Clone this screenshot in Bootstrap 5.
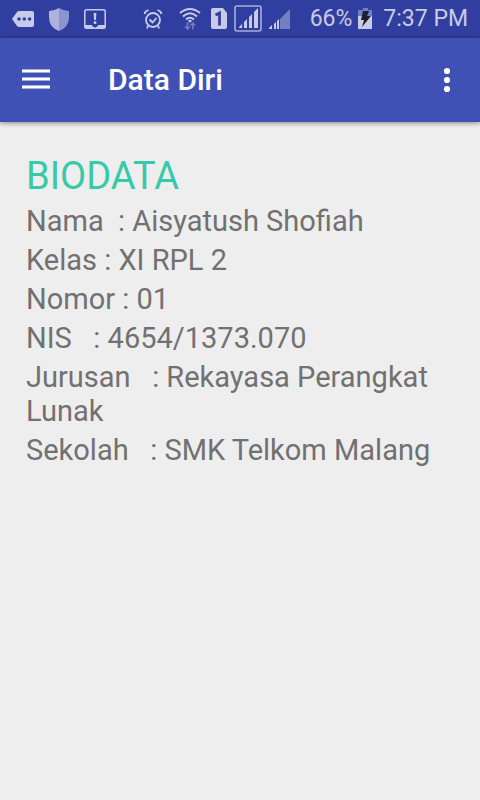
<!DOCTYPE html>
<html lang="id">
<head>
<meta charset="utf-8">
<meta name="viewport" content="width=device-width, initial-scale=1">
<title>Data Diri</title>
<link rel="stylesheet" href="https://cdn.jsdelivr.net/npm/bootstrap@5.3.0/dist/css/bootstrap.min.css">
<style>
  body { background: #eeeeee; color: #717171; font-family: Roboto, "Noto Sans", sans-serif; }
  .status-bar { background: #303f9f; color: #c8cbe7; height: 38px; padding: 0 12px; font-size: 23px; line-height: 38px; }
  .status-bar svg { display: block; flex: none; }
  .notices { gap: 14px; }
  .network { gap: 10px; }
  .radios { gap: 7px; }
  .connections { gap: 16px; }
  .indicators { gap: 19px; }
  .power { gap: 6px; }
  .readings { gap: 11px; }
  .app-bar { background: #3f51b5; height: 84px; padding: 0 22px; box-shadow: 0 1px 5px rgba(0, 0, 0, .45); }
  .app-title { font-size: 30px; line-height: 36px; font-weight: 500; margin-left: 58px; }
  .menu-button { line-height: 0; }
  .biodata { padding: 32px 26px; font-size: 29px; line-height: 34px; }
  .biodata h2 { color: #36caab; font-size: 38px; line-height: 44px; margin-bottom: 6px; }
  .biodata p { margin-bottom: 5px; white-space: pre-wrap; }
</style>
</head>
<body>
<header>
  <div class="status-bar d-flex align-items-center justify-content-between">
    <div class="notices d-flex align-items-center">
      <svg width="22" height="24" viewBox="0 0 22 24" aria-hidden="true"><path fill="#c8cbe7" d="M7 4H20q2 0 2 2V18q0 2-2 2H7q-1 0-2-1L0 12 5 5q1-1 2-1z"/><g fill="#303f9f"><circle cx="7" cy="12" r="1.8"/><circle cx="12.300" cy="12" r="1.800"/><circle cx="17.600" cy="12" r="1.800"/></g></svg>
      <svg width="22" height="24" viewBox="0 0 22 24" aria-hidden="true"><path fill="#acb2da" d="M11 1Q6 4 1 4V11Q1 20 11 24z"/><path fill="#8b94cc" d="M11 1Q16 4 21 4V11Q21 20 11 24z"/></svg>
      <svg width="22" height="24" viewBox="0 0 22 24" aria-hidden="true"><rect x=".8" y="2.800" width="20.400" height="18.400" rx="1.500" fill="none" stroke="#c8cbe7" stroke-width="1.500"/><path fill="#c8cbe7" d="M1 18H7.500L11 21.500 14.500 18H21V21H1zM9.600 6h2.800l-.5 7h-1.800z"/><circle cx="11" cy="15.500" r="1.500" fill="#c8cbe7"/></svg>
    </div>
    <div class="indicators d-flex align-items-center">
      <div class="connections d-flex align-items-center">
        <svg width="20" height="24" viewBox="0 0 20 24" fill="none" stroke="#c8cbe7" stroke-width="1.800" aria-hidden="true"><circle cx="10" cy="13" r="7"/><path d="M1.500 7Q2 4 5.500 3M18.500 7Q18 4 14.500 3M5 18.500 4 21.500M15 18.500 16 21.500M6.500 12.500 9.500 15.500 13.500 11"/></svg>
        <div class="network d-flex align-items-center">
          <svg width="22" height="24" viewBox="0 0 22 24" fill="none" stroke="#c8cbe7" stroke-width="2" aria-hidden="true"><path d="M1 6Q11-2 21 6M4 9.500Q11 3 18 9.500M7 12.500Q11 9 15 12.500"/><path fill="#c8cbe7" stroke="none" d="M9 13.500Q11 12 13 13.500L11 16z"/><path stroke="#737fc0" stroke-width="1.500" d="M8.500 15V22M6 19.500 8.500 22 11 19.500M13.800 22.500V16M11.300 18.500 13.800 16 16.300 18.500"/></svg>
          <div class="radios d-flex align-items-center">
            <svg width="16" height="24" viewBox="0 0 16 24" aria-hidden="true"><path fill="#c8cbe7" d="M2 1H12L16 6V20q0 2-2 2H2q-2 0-2-2V3q0-2 2-2z"/><path fill="none" stroke="#303f9f" stroke-width="2.800" d="M4.500 8 8.500 6V18.500"/></svg>
            <svg width="28" height="28" viewBox="0 0 28 28" aria-hidden="true"><rect x="1" y="1" width="26" height="25" rx="2" fill="none" stroke="#a6addb" stroke-width="1.600"/><path fill="#c8cbe7" d="M5 23v-1l3-3v4zM10 23v-6l3-3v9zM15 23V12l3-3v14zM20 23V7l4-4v20z"/></svg>
            <svg width="22" height="24" viewBox="0 0 22 24" aria-hidden="true"><path fill="#737fc0" d="M11 22V12L21 2V22z"/><path fill="#c8cbe7" d="M0 22v-1l3-3v4zM5 22v-5l2-2v7zM8 22v-8l2-2v10z"/></svg>
          </div>
        </div>
      </div>
      <div class="readings d-flex align-items-center">
        <div class="power d-flex align-items-center">
          <span>66%</span>
          <svg width="14" height="24" viewBox="0 0 14 24" aria-hidden="true"><path fill="#737fc0" d="M5 1h5v2h4v6H0V3h5z"/><path fill="#c8cbe7" d="M0 9h14v13H0z"/><path fill="#1b1f32" d="M5 4h6L9 9h4L4 20l2-7H3z"/></svg>
        </div>
        <time datetime="19:37">7:37 PM</time>
      </div>
    </div>
  </div>
  <nav class="app-bar navbar flex-nowrap justify-content-start" aria-label="Utama">
    <button type="button" class="menu-button btn border-0 p-0" aria-label="Menu">
      <svg width="28" height="24" viewBox="0 0 28 24" aria-hidden="true"><path fill="#a5aedd" d="M0 1h28v4H0zM0 9h28v4H0zM0 17h28v4H0z"/><path fill="#fff" d="M0 2h28v2H0zM0 10h28v2H0zM0 18h28v2H0z"/></svg>
    </button>
    <h1 class="app-title text-white mb-0">Data Diri</h1>
    <button type="button" class="menu-button btn border-0 p-0 ms-auto" aria-label="Opsi lainnya">
      <svg width="22" height="28" viewBox="0 0 22 28" fill="#fff" aria-hidden="true"><circle cx="11" cy="5" r="3.100"/><circle cx="11" cy="14" r="3.100"/><circle cx="11" cy="23" r="3.100"/></svg>
    </button>
  </nav>
</header>
<main class="biodata">
  <h2 class="fw-normal">BIODATA</h2>
  <p>Nama  : Aisyatush Shofiah</p>
  <p>Kelas : XI RPL 2</p>
  <p>Nomor : 01</p>
  <p>NIS   : 4654/1373.070</p>
  <p>Jurusan   : Rekayasa Perangkat Lunak</p>
  <p>Sekolah   : SMK Telkom Malang</p>
</main>
<script src="https://cdn.jsdelivr.net/npm/bootstrap@5.3.0/dist/js/bootstrap.bundle.min.js"></script>
</body>
</html>
